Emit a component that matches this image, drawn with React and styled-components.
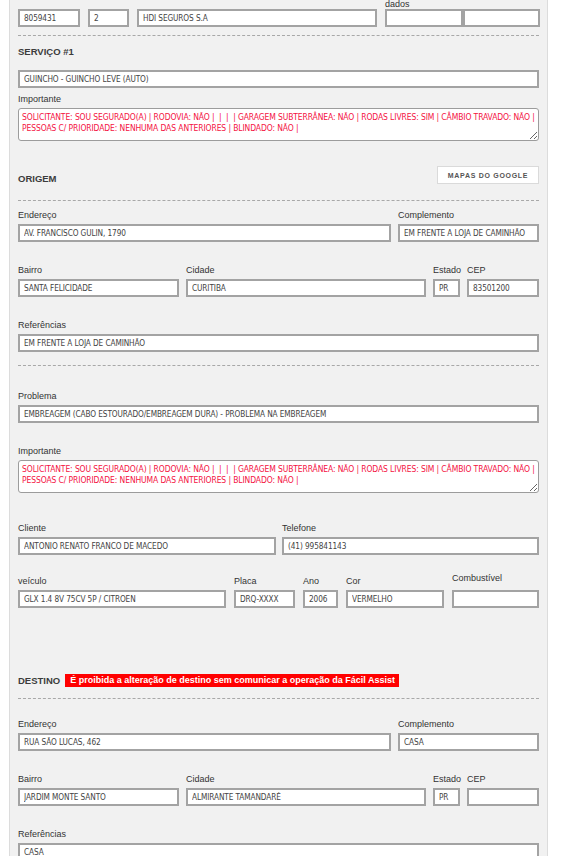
import React from "react";
import styled, { createGlobalStyle } from "styled-components";

const GlobalStyle = createGlobalStyle`
  html, body {
    margin: 0;
    padding: 0;
    background: #ffffff;
  }
  body {
    font-family: "Liberation Sans", Arial, sans-serif;
    overflow: hidden;
  }
`;

const Page = styled.div`
  padding-left: 9px;
  width: 539px;
`;

const Panel = styled.div`
  background: #f1f1f1;
  border-left: 1px solid #dcdcdc;
  border-right: 1px solid #dcdcdc;
  padding: 0 8px 40px;
  margin-top: -11px;
`;

const Row = styled.div`
  display: grid;
  grid-template-columns: ${(p) => p.$cols};
  column-gap: ${(p) => p.$gap || 7}px;
  align-items: end;
  margin-top: ${(p) => p.$mt || 0}px;
`;

const Field = styled.div`
  display: flex;
  flex-direction: column;
  min-width: 0;
`;

const Label = styled.label`
  display: block;
  font-size: 9px;
  line-height: 12px;
  height: 12px;
  margin-bottom: 3px;
  color: #333;
  white-space: nowrap;
  transform: translateY(${(p) => p.$lift || 0}px);
`;

const TopLabel = styled(Label)`
  height: 20px;
  line-height: 10px;
  margin-bottom: 0;
`;

const Input = styled.input`
  box-sizing: border-box;
  width: 100%;
  height: 18px;
  margin: 0;
  padding: 0 4px;
  border: 2px solid #a3a3a3;
  background: #fff;
  font-family: "Liberation Sans Narrow", "Arial Narrow", "DejaVu Sans Condensed", sans-serif;
  font-size: 8.2px;
  letter-spacing: -0.1px;
  line-height: 14px;
  color: #444;
  outline: none;
`;

const Pair = styled.div`
  display: grid;
  grid-template-columns: 78px 77px;
`;

const Area = styled.textarea`
  box-sizing: border-box;
  display: block;
  width: 100%;
  height: 33px;
  margin: 0;
  padding: 3px 3px;
  border: 1px solid #9c9c9c;
  border-radius: 3px;
  background: #fff;
  font-family: "Liberation Sans Narrow", "Arial Narrow", "DejaVu Sans Condensed", sans-serif;
  font-size: 8.5px;
  letter-spacing: -0.12px;
  line-height: 11px;
  color: #f4123f;
  overflow: hidden;
  white-space: pre;
  outline: none;
`;

const Divider = styled.hr`
  margin: ${(p) => p.$mt || 0}px 0 0;
  border: 0;
  border-top: 1px dashed #a8a8a8;
  height: 0;
`;

const SectionHead = styled.div`
  display: flex;
  align-items: flex-end;
  justify-content: space-between;
  gap: 6px;
  margin-top: ${(p) => p.$mt || 0}px;
  min-height: ${(p) => p.$minH || 0}px;
`;

const Title = styled.h3`
  margin: 0;
  font-size: 9.5px;
  line-height: 12px;
  font-weight: bold;
  color: #3c3c3c;
  display: flex;
  align-items: center;
  gap: 5px;
`;

const Warning = styled.span`
  background: #ff0000;
  color: #fff;
  font-weight: bold;
  font-size: 9px;
  line-height: 13px;
  padding: 0 4px 0 5px;
`;

const MapButton = styled.button`
  box-sizing: border-box;
  width: 102px;
  height: 18px;
  margin: 0 0 1px;
  padding: 0;
  background: #fff;
  border: 1px solid #dadada;
  font-family: "Liberation Sans", Arial, sans-serif;
  font-size: 7px;
  font-weight: bold;
  letter-spacing: 0.7px;
  color: #555;
  cursor: pointer;
`;

const importante =
  "SOLICITANTE: SOU SEGURADO(A) | RODOVIA: NÃO |  |  |  | GARAGEM SUBTERRÂNEA: NÃO | RODAS LIVRES: SIM | CÂMBIO TRAVADO: NÃO |\nPESSOAS C/ PRIORIDADE: NENHUMA DAS ANTERIORES | BLINDADO: NÃO |";

const F = ({ label, value = "", lift }) => (
  <Field>
    <Label $lift={lift}>{label}</Label>
    <Input readOnly value={value} />
  </Field>
);

const AddressBlock = ({ endereco, complemento, bairro, cidade, estado, cep, referencias, firstMt }) => (
  <>
    <Row $cols="1fr 141px" $mt={firstMt}>
      <F label="Endereço" value={endereco} />
      <F label="Complemento" value={complemento} />
    </Row>
    <Row $cols="161px 240px 27px 72px" $mt={22}>
      <F label="Bairro" value={bairro} />
      <F label="Cidade" value={cidade} />
      <F label="Estado" value={estado} />
      <F label="CEP" value={cep} />
    </Row>
    <Row $cols="1fr" $mt={22}>
      <F label="Referências" value={referencias} />
    </Row>
  </>
);

export default function App() {
  return (
    <Page>
      <GlobalStyle />
      <Panel>
        <Row $cols="62px 41px 240px 155px" $gap={8}>
          <Field>
            <TopLabel>Protocolo</TopLabel>
            <Input readOnly value="8059431" />
          </Field>
          <Field>
            <TopLabel>Serviço</TopLabel>
            <Input readOnly value="2" />
          </Field>
          <Field>
            <TopLabel>Seguradora</TopLabel>
            <Input readOnly value="HDI SEGUROS S.A" />
          </Field>
          <Field>
            <TopLabel>
              Última atualização dos
              <br />
              dados
            </TopLabel>
            <Pair>
              <Input readOnly value="" />
              <Input readOnly value="" />
            </Pair>
          </Field>
        </Row>

        <Divider $mt={8} />

        <SectionHead $mt={10}>
          <Title>SERVIÇO #1</Title>
        </SectionHead>
        <Row $cols="1fr" $mt={12}>
          <Input readOnly value="GUINCHO - GUINCHO LEVE (AUTO)" />
        </Row>
        <Row $cols="1fr" $mt={5}>
          <Field>
            <Label>Importante</Label>
            <Area readOnly value={importante} />
          </Field>
        </Row>

        <SectionHead $mt={25} $minH={18}>
          <Title>ORIGEM</Title>
          <MapButton>MAPAS DO GOOGLE</MapButton>
        </SectionHead>
        <Divider $mt={15} />

        <AddressBlock
          firstMt={8}
          endereco="AV. FRANCISCO GULIN, 1790"
          complemento="EM FRENTE A LOJA DE CAMINHÃO"
          bairro="SANTA FELICIDADE"
          cidade="CURITIBA"
          estado="PR"
          cep="83501200"
          referencias="EM FRENTE A LOJA DE CAMINHÃO"
        />

        <Divider $mt={13} />

        <Row $cols="1fr" $mt={24}>
          <F label="Problema" value="EMBREAGEM (CABO ESTOURADO/EMBREAGEM DURA) - PROBLEMA NA EMBREAGEM" />
        </Row>
        <Row $cols="1fr" $mt={22}>
          <Field>
            <Label>Importante</Label>
            <Area readOnly value={importante} />
          </Field>
        </Row>

        <Row $cols="258px 257px" $gap={6} $mt={29}>
          <F label="Cliente" value="ANTONIO RENATO FRANCO DE MACEDO" />
          <F label="Telefone" value="(41) 995841143" />
        </Row>
        <Row $cols="208px 61px 35px 98px 87px" $gap={8} $mt={20}>
          <F label="veículo" value="GLX 1.4 8V 75CV 5P / CITROEN" />
          <F label="Placa" value="DRQ-XXXX" />
          <F label="Ano" value="2006" />
          <F label="Cor" value="VERMELHO" />
          <F label="Combustível" value="" lift={-3} />
        </Row>

        <SectionHead $mt={66}>
          <Title>
            DESTINO
            <Warning>É proibida a alteração de destino sem comunicar a operação da Fácil Assist</Warning>
          </Title>
        </SectionHead>
        <Divider $mt={11} />

        <AddressBlock
          firstMt={19}
          endereco="RUA SÃO LUCAS, 462"
          complemento="CASA"
          bairro="JARDIM MONTE SANTO"
          cidade="ALMIRANTE TAMANDARÉ"
          estado="PR"
          cep=""
          referencias="CASA"
        />
      </Panel>
    </Page>
  );
}
